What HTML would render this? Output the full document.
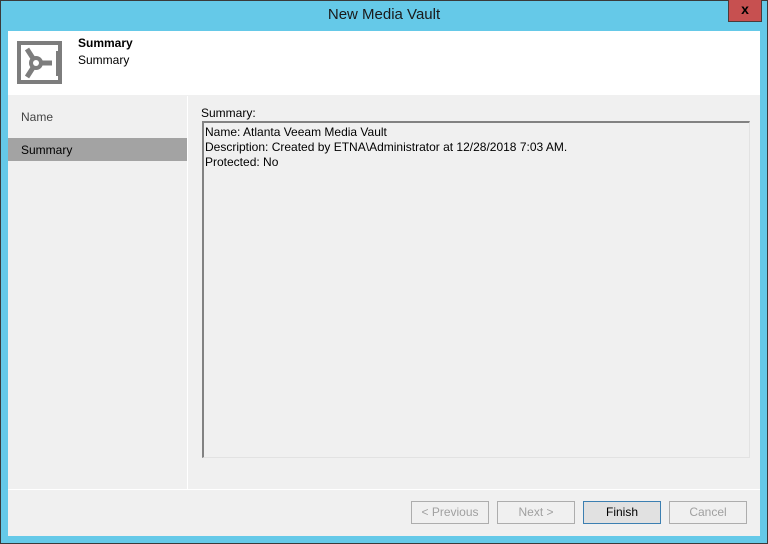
<!DOCTYPE html>
<html><head><style>
*{margin:0;padding:0;box-sizing:border-box}
body{width:768px;height:544px;background:#65c9e8;font-family:"Liberation Sans",sans-serif;font-size:12px;color:#000;position:relative;overflow:hidden}
.a{position:absolute}
.btn{position:absolute;top:501px;width:78px;height:23px;border:1px solid #adadad;background:#f0f0f0;color:#a0a0a0;text-align:center;line-height:21px;font-size:12px}
</style></head><body>
<div class="a" style="left:0;top:0;width:768px;height:544px;border:1px solid #3a3a3a"></div>
<div class="a" style="left:0;top:6px;width:768px;text-align:center;font-size:15px;color:#1a1a1a">New Media Vault</div>
<div class="a" style="left:728px;top:0;width:34px;height:22px;background:#c75050;border:1px solid #4a3a3a;border-top:none;color:#000;font-weight:bold;font-size:14px;text-align:center;line-height:19px">x</div>
<div class="a" style="left:8px;top:31px;width:752px;height:505px;background:#f0f0f0"></div>
<div class="a" style="left:8px;top:31px;width:752px;height:64px;background:#fff"></div>
<svg class="a" style="left:17px;top:41px" width="46" height="44" viewBox="0 0 46 44">
<rect x="0" y="0" width="45" height="43" fill="#7d7d7d"/>
<rect x="4" y="4" width="37" height="35" fill="#fff"/>
<rect x="39" y="10" width="2" height="25" fill="#7d7d7d"/>
<path d="M19 22 L10 8 M19 22 L10 36 M19 22 L35 22" stroke="#7d7d7d" stroke-width="5"/>
<circle cx="19" cy="22" r="7" fill="#7d7d7d"/><circle cx="19" cy="22" r="3" fill="#fff"/>
</svg>
<div class="a" style="left:78px;top:36px;font-weight:bold">Summary</div>
<div class="a" style="left:78px;top:53px">Summary</div>
<div class="a" style="left:187px;top:96px;width:1px;height:393px;background:#fff"></div>
<div class="a" style="left:21px;top:110px;color:#444">Name</div>
<div class="a" style="left:8px;top:138px;width:179px;height:23px;background:#a3a3a3"></div>
<div class="a" style="left:21px;top:143px;color:#000">Summary</div>
<div class="a" style="left:201px;top:106px">Summary:</div>
<div class="a" style="left:202px;top:121px;width:548px;height:337px;border:1px solid #e2e2e2;border-left:2px solid #828282;border-top:2px solid #828282;background:#f0f0f0"></div>
<div class="a" style="left:205px;top:125px;line-height:15px">Name: Atlanta Veeam Media Vault<br>Description: Created by ETNA\Administrator at 12/28/2018 7:03 AM.<br>Protected: No</div>
<div class="a" style="left:8px;top:489px;width:752px;height:1px;background:#fff"></div>
<div class="btn" style="left:411px">&lt; Previous</div>
<div class="btn" style="left:497px">Next &gt;</div>
<div class="btn" style="left:583px;border-color:#3c7fb1;background:#e1e1e1;color:#000">Finish</div>
<div class="btn" style="left:669px">Cancel</div>
</body></html>
